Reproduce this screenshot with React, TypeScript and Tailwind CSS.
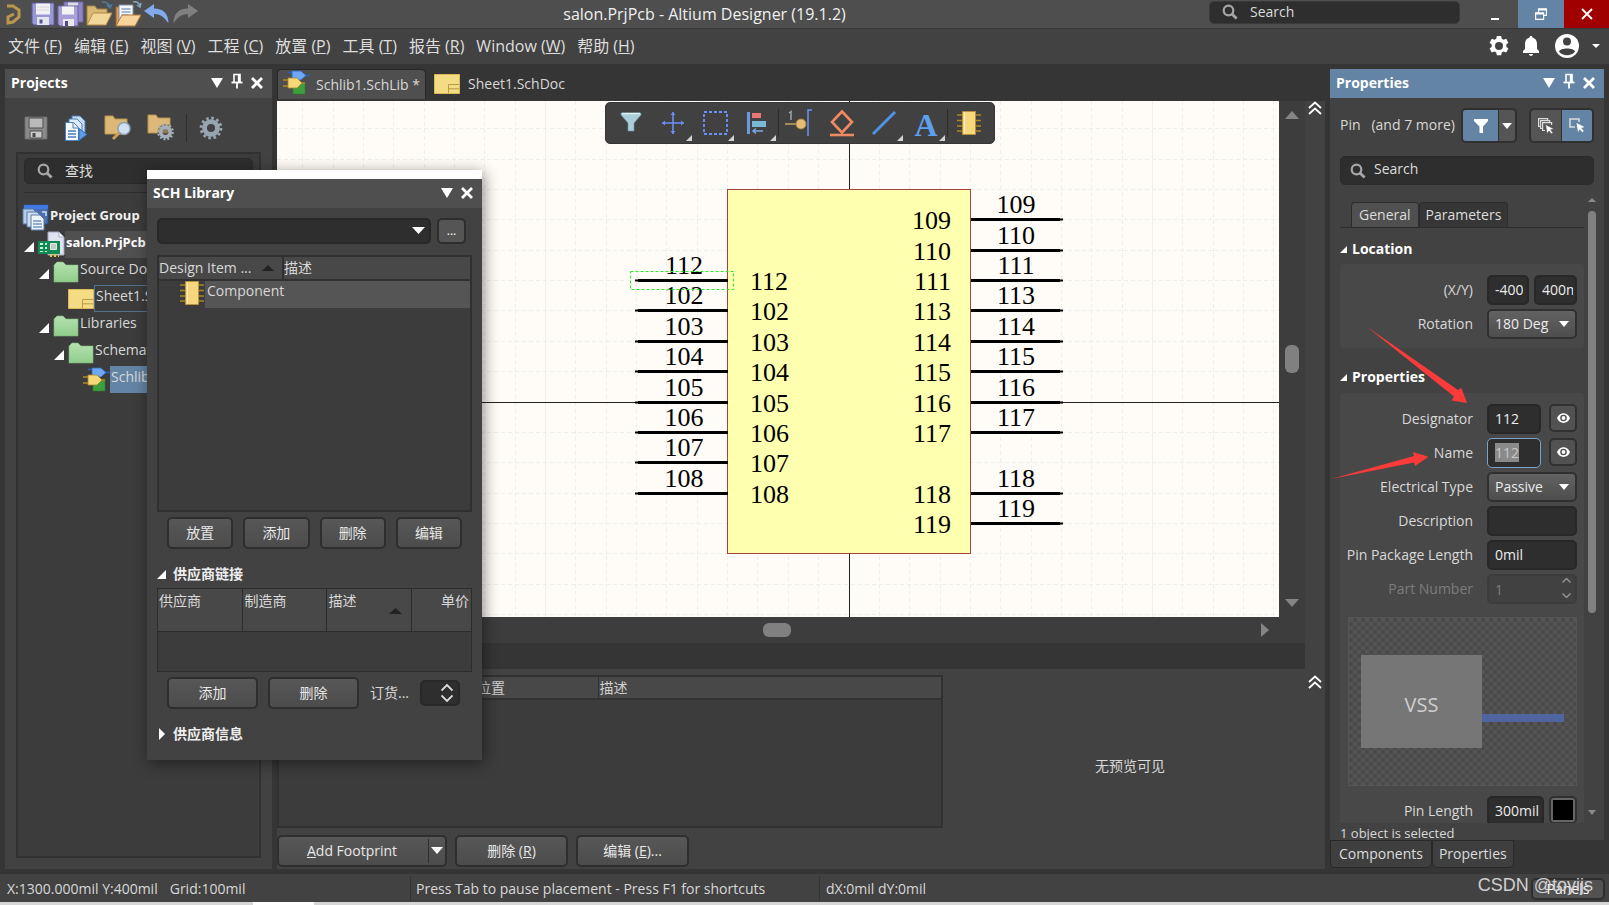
import { useEffect, useRef } from "react";
import type { ReactNode } from "react";

const leftPins = [
  { n: 112, row: 0 },
  { n: 102, row: 1 },
  { n: 103, row: 2 },
  { n: 104, row: 3 },
  { n: 105, row: 4 },
  { n: 106, row: 5 },
  { n: 107, row: 6 },
  { n: 108, row: 7 },
];

const rightPins = [
  { n: 109, row: -2 },
  { n: 110, row: -1 },
  { n: 111, row: 0 },
  { n: 113, row: 1 },
  { n: 114, row: 2 },
  { n: 115, row: 3 },
  { n: 116, row: 4 },
  { n: 117, row: 5 },
  { n: 118, row: 7 },
  { n: 119, row: 8 },
];

const menus = [
  ["文件", "F"],
  ["编辑", "E"],
  ["视图", "V"],
  ["工程", "C"],
  ["放置", "P"],
  ["工具", "T"],
  ["报告", "R"],
  ["Window", "W"],
  ["帮助", "H"],
];

/* ---------- small glyphs ---------- */

const Down = ({ className = "w-3 h-2" }: { className?: string }) => (
  <svg className={className} viewBox="0 0 12 8" preserveAspectRatio="none" fill="currentColor">
    <path d="M0 0h12L6 8z" />
  </svg>
);

const Up = ({ className = "w-3 h-2" }: { className?: string }) => (
  <svg className={className} viewBox="0 0 12 8" preserveAspectRatio="none" fill="currentColor">
    <path d="M0 8h12L6 0z" />
  </svg>
);

const Corner = ({ className = "w-2 h-2" }: { className?: string }) => (
  <svg className={className} viewBox="0 0 8 8" fill="#fff">
    <path d="M8 0v8H0z" />
  </svg>
);

const Cross = () => (
  <svg className="w-3 h-3" viewBox="0 0 12 12" stroke="#fff" strokeWidth="2.8">
    <path d="M1 1l10 10M11 1L1 11" />
  </svg>
);

const Pin = () => (
  <svg className="w-3 h-4" viewBox="0 0 12 16" fill="none" stroke="#fff">
    <path d="M3 9V1.500h6V9" strokeWidth="1.600" />
    <path d="M8 1v8" strokeWidth="2.400" />
    <path d="M0.500 9.500h11" strokeWidth="1.800" />
    <path d="M6 10v5.500" strokeWidth="1.800" />
  </svg>
);

const Magnifier = () => (
  <svg className="w-4 h-4 shrink-0" viewBox="0 0 16 16" fill="none" stroke="#a6a6a6">
    <circle cx="6.500" cy="6.500" r="4.800" strokeWidth="2.200" />
    <path d="M10 10l4.600 4.600" strokeWidth="2.800" />
  </svg>
);

const Chevrons = () => (
  <svg className="w-[14px] h-[14px]" viewBox="0 0 14 14" fill="none" stroke="#fff" strokeWidth="1.800">
    <path d="M1 7l6-5.500L13 7M1 13l6-5.500L13 13" />
  </svg>
);

const Eye = () => (
  <svg className="w-[13px] h-3" viewBox="0 0 13 12">
    <path d="M0 6C2.500-.5 10.500-.5 13 6 10.500 12.500 2.500 12.500 0 6z" fill="#fff" />
    <circle cx="6.500" cy="6" r="3.300" fill="#505050" />
    <circle cx="6.500" cy="6" r="1.900" fill="#fff" />
  </svg>
);

/* ---------- toolbar and tree icons ---------- */

const Floppy = () => (
  <svg className="w-6 h-6" viewBox="0 0 24 24">
    <path d="M1 1h22v22H3l-2-2z" fill="#9a97d6" stroke="#5d5b9e" />
    <path d="M5 1.500h14v11H5z" fill="#f2f2f4" />
    <path d="M6 5h12M6 8h12" stroke="#d5d5dc" />
    <path d="M6 15h12v8H6z" fill="#e4e6ee" />
    <path d="M8.500 17.500h3v4h-3z" fill="#54549a" />
  </svg>
);

const GrayFloppy = () => (
  <svg className="w-6 h-6" viewBox="0 0 24 24">
    <path d="M1 1h22v22H1z" fill="#8b8b8b" stroke="#6a6a6a" />
    <path d="M5 2h14v10H5z" fill="#b9b9b9" stroke="#4f4f4f" />
    <path d="M6 15h12v7H6z" fill="#c9c9c9" stroke="#4f4f4f" />
    <path d="M8.500 17h3v4h-3z" fill="#4a4a4a" />
  </svg>
);

const SaveAll = () => (
  <svg className="w-[27px] h-[26px]" viewBox="0 0 27 26">
    <path d="M7 1h19v20H7z" fill="#8f86c4" stroke="#6a62a6" />
    <path d="M11 1.500h10v6H11z" fill="#dcdce4" />
    <path d="M1 5h20v20H3l-2-2z" fill="#a9a0da" stroke="#6a62a6" />
    <path d="M5 5.500h12v8H5z" fill="#f4f4f6" />
    <path d="M6 18h11v7H6z" fill="#e8e8ee" />
    <path d="M8 20h3v5H8z" fill="#51488a" />
  </svg>
);

const OpenFolder = () => (
  <svg className="w-[27px] h-[26px]" viewBox="0 0 27 26">
    <path d="M1 24V5h8l2 3h10v5" fill="#d8b872" stroke="#a38244" />
    <path d="M1 24L7 12h19l-6 12z" fill="#f3d798" stroke="#b08c4a" />
    <path d="M16 1c4 0 7 1.500 8 5M21 4l3 3 2-4" fill="none" stroke="#4d7f98" strokeWidth="1.500" />
  </svg>
);

const OpenProject = () => (
  <svg className="w-[27px] h-[26px]" viewBox="0 0 27 26">
    <path d="M1 24V6h6v14" fill="#d89c54" stroke="#9b6427" />
    <path d="M4 4h14v17H4z" fill="#f4f7fb" stroke="#8292ab" />
    <path d="M6.500 8h9M6.500 11h9M6.500 14h7" stroke="#8aa4cc" strokeWidth="1.400" />
    <path d="M1 25l6-11h19l-6 11z" fill="#f9d39c" stroke="#b07b3c" />
    <path d="M18 1c4-1 6 1 7 4M22 4l3 2 1-4" fill="none" stroke="#7fa6c0" strokeWidth="1.500" />
  </svg>
);

const Undo = () => (
  <svg className="w-[26px] h-[22px]" viewBox="0 0 26 22" fill="#82abee">
    <path d="M0 8l10-7v4.500c9 0 14.500 5 14.500 15C20.500 14 16 11 10 11v4z" />
  </svg>
);

const Redo = () => (
  <svg className="w-[26px] h-[22px]" viewBox="0 0 26 22" fill="#808080">
    <path d="M26 8L16 1v4.500c-9 0-14.500 5-14.500 15C5.500 14 10 11 16 11v4z" />
  </svg>
);

const CompileDocs = () => (
  <svg className="w-6 h-[26px]" viewBox="0 0 24 26">
    <path d="M8 1h8l5 5v12H8z" fill="#c7dcf2" stroke="#4d7fb8" />
    <path d="M5 4h8l5 5v12H5z" fill="#dce9f7" stroke="#4d7fb8" />
    <path d="M1.500 7.500h8l5 5v13h-13z" fill="#f3f8fd" stroke="#4d7fb8" />
    <path d="M9 8v5h5" fill="none" stroke="#4d7fb8" />
    <path d="M4 16h8M4 19h8M4 22h8" stroke="#4d7fb8" strokeWidth="1.400" />
    <path d="M15 13.500l8 6-8 6z" fill="#5b9ce4" stroke="#2f6cb4" />
  </svg>
);

const GearShape = ({ cx, cy, r, color }: { cx: number; cy: number; r: number; color: string }) => (
  <g fill="none" stroke={color}>
    <circle cx={cx} cy={cy} r={r * 0.56} strokeWidth={r * 0.42} />
    <circle cx={cx} cy={cy} r={r * 0.86} strokeWidth={r * 0.26} strokeDasharray={`${r * 0.225} ${r * 0.225}`} />
  </g>
);

const FolderSearch = () => (
  <svg className="w-[27px] h-[26px]" viewBox="0 0 27 26">
    <path d="M1 1h8l2 3h12v15H1z" fill="#dcb878" stroke="#b8934e" />
    <path d="M15 18l-6 6" stroke="#cf9f55" strokeWidth="3" />
    <circle cx="20" cy="13.500" r="6" fill="#cfe1f0" stroke="#8ea3b5" strokeWidth="1.500" />
  </svg>
);

const FolderGear = () => (
  <svg className="w-[27px] h-[27px]" viewBox="0 0 27 27">
    <path d="M1 1h8l2 3h12v15H1z" fill="#dcb878" stroke="#b8934e" />
    <circle cx="18.500" cy="18" r="8" fill="#424242" opacity=".5" />
    <GearShape cx={18.5} cy={18} r={8.5} color="#a5b0b8" />
  </svg>
);

const Gear = () => (
  <svg className="w-6 h-6" viewBox="0 0 24 24">
    <GearShape cx={12} cy={12} r={11.5} color="#96a5b0" />
  </svg>
);

const GroupIcon = () => (
  <svg className="w-[27px] h-[27px] shrink-0" viewBox="0 0 27 27">
    <path d="M2 1h24v19H2z" fill="#4b6fb0" stroke="#2f4d86" />
    <path d="M2 1h24v4H2z" fill="#3f78e0" />
    <path d="M1 5h10l2 2v13H1z" fill="#b6cbe6" stroke="#5b7aa6" />
    <path d="M5 8h10l3 3v12H5z" fill="#cfdff2" stroke="#5b7aa6" />
    <path d="M9 11h9l4 4v11H9z" fill="#eef4fb" stroke="#5b7aa6" />
    <path d="M11 17h8M11 20h9M11 23h9" stroke="#7395c4" strokeWidth="1.300" />
    <path d="M20 8h4v4" fill="none" stroke="#cfdff2" strokeWidth="1.500" />
  </svg>
);

const PcbProject = () => (
  <svg className="w-[27px] h-[27px] shrink-0" viewBox="0 0 27 27">
    <path d="M10 1h11l5 5v18H10z" fill="#dfe2f0" stroke="#a2a8c2" />
    <path d="M21 1v5h5z" fill="#fff" stroke="#a2a8c2" />
    <path d="M0 10h22v13H0z" fill="#128a54" />
    <path d="M2 12h3v2H2zM2 16h3v2H2zM2 20h3v1H2zM7 12h2v2H7zM7 16h2v2H7zM7 20h2v1H7z" fill="#c9f5df" />
    <path d="M12.500 12.500h6v6h-6z" fill="#c8c8c8" stroke="#e9e9e9" />
    <path d="M12 23h2v3h-2zM16 23h2v3h-2zM20 23h1v3h-1z" fill="#e2c64b" />
  </svg>
);

const GreenFolder = () => (
  <svg className="w-[26px] h-[22px] shrink-0" viewBox="0 0 26 22">
    <defs>
      <linearGradient id="folder" x1="0" y1="0" x2="0" y2="1">
        <stop offset="0" stopColor="#b5e2b1" />
        <stop offset="1" stopColor="#8fcd8a" />
      </linearGradient>
    </defs>
    <path d="M1 21V4l3-3h6l3 3h12v17z" fill="url(#folder)" stroke="#7cb878" strokeWidth=".6" />
  </svg>
);

const SheetIcon = () => (
  <svg className="w-[26px] h-5 shrink-0" viewBox="0 0 26 20">
    <path d="M.5.5h25v19H.5z" fill="#f3dc84" stroke="#d9b958" />
    <path d="M14.500 19v-8.500H25M14.500 14.800H25" fill="none" stroke="#b99b46" />
  </svg>
);

const SchLibIcon = () => (
  <svg className="w-[27px] h-[26px] shrink-0" viewBox="0 0 27 26">
    <path d="M10 13h12v11H10z" fill="#3c9e3c" stroke="#2c7a2c" strokeDasharray="1.500 1" />
    <path d="M5 2.500h5M22 5.500h5" stroke="#2c62b8" strokeWidth="1.400" />
    <path d="M9 1h9l5 4.500-5 4.500H9z" fill="#6ea7f5" stroke="#2f66bd" strokeWidth=".8" />
    <path d="M0 10h6M0 16h6M17 13h5" stroke="#b18c22" strokeWidth="1.400" />
    <path d="M5 8h9l5 5-5 5H5z" fill="#f6d878" stroke="#a98726" strokeWidth=".8" />
  </svg>
);

const ChipIcon = () => (
  <svg className="w-6 h-6 shrink-0" viewBox="0 0 24 24">
    <path d="M0 4h24M0 9.500h24M0 15h24M0 20h24" stroke="#a98726" strokeWidth="1.400" />
    <path d="M5.500.5h13v23h-13z" fill="#f7d77e" stroke="#b8923a" />
    <path d="M7.500 1.500v21" stroke="#fff0bd" />
  </svg>
);

/* ---------- shared controls ---------- */

const PanelHeader = ({ title, active, pinned = true }: { title: string; active?: boolean; pinned?: boolean }) => (
  <div className={`flex h-[29px] shrink-0 items-center gap-2 pb-px pl-[6px] pr-[9px] text-white ${active ? "bg-[#6384a4]" : "bg-[#4f4f4f]"}`}>
    <h2 className="flex-1 text-sm font-bold">{title}</h2>
    <button aria-label="Panel menu">
      <Down className="w-3 h-[10px]" />
    </button>
    {pinned && (
      <button aria-label="Pin panel" className="mb-1">
        <Pin />
      </button>
    )}
    <button aria-label="Close panel">
      <Cross />
    </button>
  </div>
);

const Button = ({ children, className = "" }: { children: ReactNode; className?: string }) => (
  <button
    className={`h-8 rounded-[5px] border-2 border-[#2e2e2e] bg-linear-to-b from-[#575757] to-[#4c4c4c] text-sm text-[#e8e8e8] ${className}`}
  >
    {children}
  </button>
);

const Field = ({ label, id, dim, children }: { label: string; id: string; dim?: boolean; children: ReactNode }) => (
  <div className="flex h-[30px] items-center gap-[14px]">
    <label htmlFor={id} className={`flex-1 pb-px text-right whitespace-nowrap ${dim ? "text-[#7c7c7c]" : "text-[#d8d8d8]"}`}>
      {label}
    </label>
    <div className="flex h-full w-[90px] justify-between">{children}</div>
  </div>
);

const inputClass = "h-full min-w-0 rounded-[5px] border-2 border-[#282828] bg-[#2e2e2e] pb-px text-[#ececec] outline-none";

const SelectBox = ({ id, value }: { id: string; value: string }) => (
  <div className="relative h-full w-full">
    <select
      id={id}
      defaultValue={value}
      className="h-full w-full appearance-none rounded-[5px] border-2 border-[#303030] bg-linear-to-b from-[#626262] to-[#4e4e4e] pb-px pl-[6px] text-[#ececec] outline-none"
    >
      <option>{value}</option>
    </select>
    <Down className="pointer-events-none absolute right-2 top-3 w-[10px] h-[6px] text-white" />
  </div>
);

/* ---------- title and menu ---------- */

const TitleBar = () => (
  <header className="flex h-7 shrink-0 items-center bg-[#4e4e4e]">
    <div className="flex w-[200px] items-center gap-[2px] pl-[6px]">
      <svg className="mr-2 w-[15px] h-[22px]" viewBox="0 0 15 22" fill="none" stroke="#b9964d" strokeWidth="3">
        <path d="M1 3h6l6 4v7l-6 5-5 1v-6l6-3" />
      </svg>
      <Floppy />
      <SaveAll />
      <OpenFolder />
      <OpenProject />
      <Undo />
      <Redo />
    </div>
    <h1 className="flex-1 text-center text-base leading-5 text-[#f0f0f0]">salon.PrjPcb - Altium Designer (19.1.2)</h1>
    <div className="mb-1 flex h-[23px] w-[251px] items-center gap-3 rounded-[5px] border border-[#3a3a3a] bg-[#2e2e2e] pl-3">
      <Magnifier />
      <input
        aria-label="Search"
        placeholder="Search"
        className="min-w-0 flex-1 bg-transparent text-sm text-[#dcdcdc] outline-none placeholder:text-[#dcdcdc]"
      />
    </div>
    <div className="ml-3 flex h-full">
      <button aria-label="Minimize" className="flex w-[46px] items-end justify-center pb-2">
        <span className="h-[2px] w-2 bg-white" />
      </button>
      <button aria-label="Restore" className="flex w-[46px] items-center justify-center bg-[#6384a4]">
        <svg className="w-3 h-3" viewBox="0 0 12 12" fill="none" stroke="#fff">
          <path d="M3.500 5V.8h8v6.500H9M3.500 2h8" strokeWidth="1.200" />
          <path d="M.6 4.800h8v6.500h-8zM.6 6h8" strokeWidth="1.200" />
        </svg>
      </button>
      <button aria-label="Close" className="flex w-[45px] items-center justify-center bg-[#a00000]">
        <svg className="w-3 h-3" viewBox="0 0 12 12" stroke="#fff" strokeWidth="1.800">
          <path d="M1 1l10 10M11 1L1 11" />
        </svg>
      </button>
    </div>
  </header>
);

const MenuBar = () => (
  <nav className="flex h-9 shrink-0 items-center border-t border-[#383838] bg-[#424242] px-2 pb-[2px]">
    <div className="flex flex-1 gap-3 text-base leading-5 text-[#dedede]">
      {menus.map(([name, key]) => (
        <button key={key}>
          {name} (<span className="underline">{key}</span>)
        </button>
      ))}
    </div>
    <div className="flex items-center gap-[13px] pr-px">
      <button aria-label="Settings">
        <svg className="w-5 h-5" viewBox="0 0 20 20" fill="#fff">
          <path
            fillRule="evenodd"
            d="M7.800 0h4.400l.5 2.700 1.900 1.100 2.600-1 2.200 3.900-2.100 1.800v2.200l2.100 1.800-2.200 3.900-2.600-1-1.900 1.100-.5 2.700H7.800l-.5-2.700-1.900-1.100-2.600 1L.6 12.500l2.100-1.800V8.500L.6 6.700l2.200-3.900 2.600 1 1.900-1.100zM10 6a4 4 0 100 8 4 4 0 000-8z"
          />
        </svg>
      </button>
      <button aria-label="Notifications">
        <svg className="w-[18px] h-5" viewBox="0 0 18 20" fill="#fff">
          <path d="M9 0c1 0 1.500.7 1.500 1.500C13.500 2.300 15 4.800 15 8v5l2 2v2H1v-2l2-2V8c0-3.200 1.500-5.700 4.500-6.500C7.500.7 8 0 9 0zM7 18h4c0 2.600-4 2.600-4 0z" />
        </svg>
      </button>
      <button aria-label="Account">
        <svg className="ml-[2px] w-6 h-6" viewBox="0 0 24 24">
          <circle cx="12" cy="12" r="12" fill="#fff" />
          <circle cx="12" cy="7.500" r="4" fill="#424242" />
          <path d="M4 17.500c1-4 15-4 16 0-3.500 5-12.500 5-16 0z" fill="#424242" />
        </svg>
      </button>
      <button aria-label="Account menu" className="text-white">
        <Down className="w-2 h-1" />
      </button>
    </div>
  </nav>
);

/* ---------- projects ---------- */

const TreeRow = ({
  indent,
  icon,
  open,
  label,
  labelClass = "",
}: {
  indent: string;
  icon: ReactNode;
  open?: boolean;
  label: string;
  labelClass?: string;
}) => (
  <li className={`flex h-[27px] items-center ${indent}`}>
    <span className="flex w-[14px] shrink-0">{open && <Corner className="mt-1 w-[10px] h-[10px]" />}</span>
    {icon}
    <span className={`flex h-full flex-1 items-center pb-[5px] pl-px whitespace-nowrap ${labelClass}`}>{label}</span>
  </li>
);

const ProjectsPanel = () => (
  <aside className="flex w-[267px] shrink-0 flex-col bg-[#424242]">
    <PanelHeader title="Projects" />
    <div className="flex h-[54px] shrink-0 items-center gap-4 px-[19px] pt-[5px]">
      <button aria-label="Save">
        <GrayFloppy />
      </button>
      <button aria-label="Compile">
        <CompileDocs />
      </button>
      <button aria-label="Explore">
        <FolderSearch />
      </button>
      <button aria-label="Project options">
        <FolderGear />
      </button>
      <span className="-mx-1 h-7 w-px bg-[#2f2f2f]" />
      <button aria-label="Settings">
        <Gear />
      </button>
    </div>
    <div className="mx-[11px] mb-[11px] flex flex-1 flex-col overflow-hidden border-2 border-[#313131] bg-[#3c3c3c] px-[6px] pt-1">
      <div className="flex h-[26px] shrink-0 items-center gap-3 rounded-[5px] border border-[#292929] bg-[#2e2e2e] pb-px pl-3">
        <Magnifier />
        <input
          aria-label="查找"
          placeholder="查找"
          className="min-w-0 flex-1 bg-transparent text-sm outline-none placeholder:text-[#dcdcdc]"
        />
      </div>
      <div className="mt-2 mb-[11px] h-px shrink-0 bg-[#2c2c2c]" />
      <ul className="text-sm text-[#d8d8d8]">
        <TreeRow indent="-ml-4" icon={<GroupIcon />} label="Project Group" labelClass="text-[13px] font-bold text-[#f2f2f2]" />
        <TreeRow indent="" open icon={<PcbProject />} label="salon.PrjPcb" labelClass="bg-[#505050] text-[13px] font-bold text-white" />
        <TreeRow indent="pl-[15px]" open icon={<GreenFolder />} label="Source Documents" />
        <TreeRow indent="pl-[30px]" icon={<SheetIcon />} label="Sheet1.SchDoc" labelClass="border border-[#53708c]" />
        <TreeRow indent="pl-[15px]" open icon={<GreenFolder />} label="Libraries" />
        <TreeRow indent="pl-[30px]" open icon={<GreenFolder />} label="Schematic Library" />
        <TreeRow indent="pl-[45px]" icon={<SchLibIcon />} label="Schlib1.SchLib *" labelClass="bg-[#6384a4]" />
      </ul>
    </div>
  </aside>
);

/* ---------- schematic canvas ---------- */

const PITCH = 30.35;
const ORIGIN = { x: 573, y: 301 };
const steps = Array.from({ length: 70 }, (_, i) => i - 30);

const rowY = (row: number) => Math.floor(ORIGIN.y + (row - 4) * PITCH);

const Schematic = () => (
  <svg className="absolute inset-0 h-full w-full bg-[#fffcf7]" fontFamily="Liberation Serif, serif" fontSize="26">
    <g stroke="#efefec">
      {steps.map((i) => {
        const x = Math.floor(ORIGIN.x + i * PITCH) - 0.5;
        const y = Math.floor(ORIGIN.y + i * PITCH) + 0.5;
        const dash = i % 10 === 0 ? undefined : "4 3";
        return (
          <g key={i} strokeDasharray={dash}>
            <path d={`M${x} 0V2000`} />
            <path d={`M0 ${y}H3000`} />
          </g>
        );
      })}
    </g>
    <path d={`M${ORIGIN.x - 0.5} 0V2000M0 ${ORIGIN.y + 0.5}H3000`} stroke="#222" />
    <rect x="450.500" y="88.500" width="243" height="364" fill="#ffffb0" stroke="#a2433c" />
    {leftPins.map(({ n, row }) => (
      <g key={n}>
        <path d={`M361 ${rowY(row) + 0.5}H451`} stroke="#000" strokeWidth="3" />
        <path d={`M358 ${rowY(row) + 0.5}H362`} stroke="#000" strokeWidth="2" />
        <text x="407" y={rowY(row) - 6} textAnchor="middle">
          {n}
        </text>
        <text x="473" y={rowY(row) + 10}>
          {n}
        </text>
      </g>
    ))}
    {rightPins.map(({ n, row }) => (
      <g key={n}>
        <path d={`M694 ${rowY(row) + 0.5}H783`} stroke="#000" strokeWidth="3" />
        <path d={`M782 ${rowY(row) + 0.5}H786`} stroke="#000" strokeWidth="2" />
        <text x="739" y={rowY(row) - 6} textAnchor="middle">
          {n}
        </text>
        <text x="674" y={rowY(row) + 10} textAnchor="end">
          {n}
        </text>
      </g>
    ))}
    <rect x="353.500" y="170.500" width="103" height="18" fill="none" stroke="#2bea2b" strokeDasharray="3 2" />
  </svg>
);

const Tool = ({ label, more, children }: { label: string; more?: boolean; children: ReactNode }) => (
  <button aria-label={label} className="relative flex h-10 w-[42px] items-center justify-center">
    <svg className="w-[30px] h-7" viewBox="0 0 30 28" fill="none">
      {children}
    </svg>
    {more && (
      <svg className="absolute bottom-[2px] right-[2px] w-[6px] h-[6px]" viewBox="0 0 6 6" fill="#d4d4d4">
        <path d="M6 0v6H0z" />
      </svg>
    )}
  </button>
);

const ActiveBar = () => (
  <div className="absolute left-[328px] top-px flex h-[42px] items-center rounded-[5px] border border-[#363636] bg-[#414141] px-1">
    <Tool label="Filter">
      <path d="M5 4h20v2l-7 8v8h-6v-8L5 6z" fill="#a9cdd9" stroke="#6b97a8" strokeWidth=".6" />
      <path d="M6 4.500h18" stroke="#e0f0f4" strokeWidth="1.500" />
    </Tool>
    <Tool label="Move" more>
      <path d="M15 3v22M4 14h22" stroke="#6a8ff0" strokeWidth="1.600" />
      <path d="M12.500 6L15 3l2.500 3zM12.500 22l2.500 3 2.500-3zM7 11.500L4 14l3 2.500zM23 11.500l3 2.500-3 2.500z" fill="#6a8ff0" />
    </Tool>
    <Tool label="Select" more>
      <path d="M4 3h23v22H4z" stroke="#6a93f5" strokeWidth="1.800" strokeDasharray="3 2" />
    </Tool>
    <Tool label="Align" more>
      <path d="M5 3h3v22H5z" fill="#6f98d8" />
      <path d="M10 4h9v5h-9z" fill="#ea7676" />
      <path d="M10 12h14v6H10z" fill="#79b9d8" />
      <path d="M11 22h10M14 19.500L11 22l3 2.500" stroke="#7aa7e6" strokeWidth="1.500" />
    </Tool>
    <span className="h-7 w-px bg-[#2c2c2c]" />
    <Tool label="Place pin">
      <path d="M0 15h13" stroke="#b3935a" strokeWidth="1.800" />
      <circle cx="16" cy="15" r="5" fill="#e6bd76" stroke="#a88546" />
      <path d="M27 1h-4v26" stroke="#6a93f5" strokeWidth="1.500" />
      <path d="M4 4l2-1.500V11" stroke="#9aa7ae" strokeWidth="1.500" />
    </Tool>
    <Tool label="Place IEEE symbol">
      <path d="M15 2.500L25 13 15 23.500 5 13z" stroke="#f08a62" strokeWidth="2.600" />
      <path d="M3 26h24" stroke="#f08a62" strokeWidth="2.600" />
    </Tool>
    <Tool label="Place line" more>
      <path d="M4 25L26 3" stroke="#4f92e4" strokeWidth="3" />
    </Tool>
    <button
      aria-label="Place text"
      className="relative flex h-10 w-[42px] items-center justify-center pt-1 font-['Liberation_Serif',serif] text-[32px] font-bold text-[#5e9fee]"
    >
      A
      <svg className="absolute bottom-[2px] right-[2px] w-[6px] h-[6px]" viewBox="0 0 6 6" fill="#d4d4d4">
        <path d="M6 0v6H0z" />
      </svg>
    </button>
    <span className="h-7 w-px bg-[#2c2c2c]" />
    <button aria-label="Place part" className="flex h-10 w-[42px] items-center justify-center">
      <ChipIcon />
    </button>
  </div>
);

const Editor = () => (
  <main className="flex min-w-0 flex-1 flex-col">
    <div className="flex h-8 shrink-0 text-sm text-[#d8d8d8]">
      <button className="flex h-[30px] items-center gap-[6px] rounded-t-[5px] border border-b-0 border-[#282828] bg-[#4f4f4f] px-[5px]">
        <span className="-mt-1">
          <SchLibIcon />
        </span>
        Schlib1.SchLib *
      </button>
      <button className="flex h-[30px] items-center gap-2 px-2">
        <SheetIcon />
        Sheet1.SchDoc
      </button>
    </div>

    <div className="flex min-h-0 flex-1">
      <div className="flex min-w-0 flex-1 flex-col">
        <div className="relative flex-1 overflow-hidden">
          <Schematic />
          <ActiveBar />
        </div>
        <div className="flex h-[26px] shrink-0 items-center bg-[#3d3d3d] pr-[10px] pl-4">
          <div className="flex flex-1 justify-center">
            <span className="h-[14px] w-7 rounded-md bg-[#808080]" />
          </div>
          <svg className="w-2 h-[14px]" viewBox="0 0 8 14" fill="#858585">
            <path d="M0 0v14l8-7z" />
          </svg>
        </div>
      </div>
      <div className="flex w-[26px] shrink-0 flex-col items-center justify-between bg-[#3d3d3d] pt-[10px] pb-9 text-[#858585]">
        <Up className="w-[14px] h-2" />
        <span className="h-7 w-[14px] rounded-md bg-[#808080]" />
        <Down className="w-[14px] h-2" />
      </div>
      <div className="w-5 shrink-0 bg-[#424242]">
        <button aria-label="Expand" className="block pl-[3px]">
          <Chevrons />
        </button>
      </div>
    </div>

    <div className="h-[26px] shrink-0 border-r-20 border-[#424242] bg-[#353535]" />

    <div className="flex h-[200px] shrink-0 bg-[#424242]">
      <div className="flex w-[666px] shrink-0 flex-col pt-[6px]">
        <div className="h-[153px] border-2 border-[#313131] bg-[#3c3c3c]">
          <table className="w-full table-fixed text-left text-sm text-[#d0d0d0]">
            <thead>
              <tr className="h-[22px] border-b-2 border-[#313131] bg-[#484848]">
                <th className="w-[198px] p-0" />
                <th className="w-[121px] p-0 font-normal">位置</th>
                <th className="border-l border-[#313131] p-0 pl-px font-normal">描述</th>
              </tr>
            </thead>
          </table>
        </div>
        <div className="mt-[7px] flex gap-2">
          <div className="relative flex">
            <Button className="w-[170px] pr-5">
              <span className="underline">A</span>dd Footprint
            </Button>
            <span className="pointer-events-none absolute right-[18px] top-1 h-6 w-px bg-[#2e2e2e]" />
            <Down className="pointer-events-none absolute right-1 top-3 w-3 h-[7px] text-white" />
          </div>
          <Button className="w-[113px]">
            删除 (<span className="underline">R</span>)
          </Button>
          <Button className="w-[113px]">
            编辑 (<span className="underline">E</span>)...
          </Button>
        </div>
      </div>
      <div className="flex flex-1 items-center justify-center pb-[6px] pl-3 text-sm text-[#d8d8d8]">无预览可见</div>
      <div className="w-5 pt-[6px]">
        <button aria-label="Expand" className="block pl-[3px]">
          <Chevrons />
        </button>
      </div>
    </div>
  </main>
);

/* ---------- floating library window ---------- */

const SchLibrary = () => (
  <section className="absolute left-[147px] top-[170px] w-[335px] border-t-[9px] border-white bg-[#424242] text-sm text-[#d8d8d8] shadow-[2px_3px_14px_rgba(0,0,0,0.45)]">
    <PanelHeader title="SCH Library" pinned={false} />
    <div className="px-[10px] pt-[10px] pb-[14px]">
      <div className="flex h-[26px] gap-[6px] pr-[6px]">
        <div className="relative flex-1">
          <select
            aria-label="Library"
            className="h-full w-full appearance-none rounded-[5px] border-2 border-[#282828] bg-[#2e2e2e] outline-none"
          />
          <Down className="pointer-events-none absolute right-[6px] top-[9px] w-[13px] h-[7px] text-white" />
        </div>
        <button className="w-[29px] rounded-[5px] border-2 border-[#2e2e2e] bg-[#555] text-xs text-white">...</button>
      </div>

      <div className="mt-[11px] h-[257px] border-2 border-[#303030] bg-[#3c3c3c]">
        <table className="w-full table-fixed text-left">
          <thead>
            <tr className="h-[23px] border-b-2 border-[#303030] bg-[#484848]">
              <th className="w-[124px] p-0 font-normal">
                <div className="flex items-center justify-between pr-2 whitespace-nowrap">
                  Design Item ...
                  <Up className="w-3 h-[6px] text-[#222]" />
                </div>
              </th>
              <th className="border-l-2 border-[#303030] p-0 font-normal">描述</th>
            </tr>
          </thead>
          <tbody>
            <tr className="h-[27px]">
              <td colSpan={2} className="p-0">
                <div className="flex h-[27px] pl-[21px]">
                  <ChipIcon />
                  <span className="ml-px flex-1 bg-[#555] pl-[2px]">Component</span>
                </div>
              </td>
            </tr>
          </tbody>
        </table>
      </div>

      <div className="mt-[5px] grid grid-cols-4 gap-[10px] px-[10px]">
        <Button>放置</Button>
        <Button>添加</Button>
        <Button>删除</Button>
        <Button>编辑</Button>
      </div>

      <h3 className="mt-[13px] flex h-6 items-center gap-[7px] font-bold text-[#eee]">
        <Corner className="w-[9px] h-[9px]" />
        供应商链接
      </h3>
      <div className="mt-[2px] h-[84px] border border-[#2c2c2c] bg-[#3c3c3c]">
        <table className="w-full table-fixed text-left">
          <thead>
            <tr className="h-[42px] border-b border-[#2c2c2c] bg-[#484848] align-top">
              <th className="w-[84px] pt-[2px] pl-px font-normal">供应商</th>
              <th className="w-[84px] border-l border-[#2c2c2c] pt-[2px] pl-[2px] font-normal">制造商</th>
              <th className="w-[85px] border-l border-[#2c2c2c] pt-[2px] pl-[2px] font-normal">
                <div className="flex justify-between pr-[9px]">
                  描述
                  <Up className="mt-[17px] w-[13px] h-[6px] text-[#222]" />
                </div>
              </th>
              <th className="border-l border-[#2c2c2c] pt-[2px] pr-[2px] text-right font-normal">单价</th>
            </tr>
          </thead>
        </table>
      </div>

      <div className="mt-[5px] flex items-center gap-[10px] pr-3 pl-[10px]">
        <Button className="w-[91px]">添加</Button>
        <Button className="w-[91px]">删除</Button>
        <label htmlFor="qty" className="flex-1 pl-px whitespace-nowrap">
          订货...
        </label>
        <div className="relative h-[26px] w-10">
          <input id="qty" className="h-full w-full rounded-[5px] border-2 border-[#282828] bg-[#2e2e2e] outline-none" />
          <svg className="pointer-events-none absolute right-[7px] top-1 w-3 h-[18px]" viewBox="0 0 12 18" fill="none" stroke="#ddd" strokeWidth="1.800">
            <path d="M.5 6.500L6 1l5.500 5.500M.5 11.500L6 17l5.500-5.500" />
          </svg>
        </div>
      </div>

      <h3 className="mt-[13px] flex h-6 items-center gap-2 font-bold text-[#eee]">
        <svg className="ml-[2px] w-[6px] h-3" viewBox="0 0 6 12" fill="#fff">
          <path d="M0 0v12l6-6z" />
        </svg>
        供应商信息
      </h3>
    </div>
  </section>
);

/* ---------- properties ---------- */

const PropertiesPanel = () => {
  const nameRef = useRef<HTMLInputElement>(null);

  useEffect(() => {
    nameRef.current?.focus();
    nameRef.current?.select();
  }, []);

  return (
    <aside className="relative flex w-[274px] shrink-0 flex-col text-sm">
      <div className="flex min-h-0 flex-1 flex-col bg-[#424242]">
        <PanelHeader title="Properties" active />
        <div className="mt-[10px] flex h-[35px] shrink-0 items-center pl-[10px] pr-[10px] text-[#d8d8d8]">
          <span className="flex-1 pb-[2px] whitespace-pre">Pin   (and 7 more)</span>
          <div className="flex h-full rounded-[5px] border-2 border-[#303030] bg-[#555] text-white">
            <button aria-label="Filter" className="flex w-[35px] items-center justify-center rounded-l-[3px] bg-[#6384a4]">
              <svg className="w-[14px] h-[14px]" viewBox="0 0 14 14" fill="#fff">
                <path d="M0 0h14v2L9 7.500V14H5.500V7.500L0 2z" />
              </svg>
            </button>
            <button aria-label="Filter options" className="flex w-[17px] items-center justify-center border-l border-[#303030]">
              <Down className="w-[10px] h-[6px]" />
            </button>
          </div>
          <div className="ml-3 flex h-full rounded-[5px] border-2 border-[#303030] bg-[#555]">
            <button aria-label="Select similar" className="flex w-[30px] items-center justify-center">
              <svg className="w-4 h-4" viewBox="0 0 16 16" fill="none" stroke="#ddd">
                <path d="M2 8.500H.6V.6h9V2" strokeWidth="1.200" />
                <path d="M4 10.500H2.600V2.600h9V4" strokeWidth="1.200" />
                <path d="M7 12.500H4.600V4.600h9V7" strokeWidth="1.200" />
                <path d="M7.500 6.500L16 11l-3.400.8 2.400 3-1.500 1.200-2.400-3-2 2.500z" fill="#fff" stroke="#555" strokeWidth=".6" />
              </svg>
            </button>
            <button aria-label="Select one" className="flex w-[31px] items-center justify-center rounded-r-[3px] border-l border-[#303030] bg-[#6384a4]">
              <svg className="w-4 h-4" viewBox="0 0 16 16" fill="none" stroke="#ddd">
                <path d="M6 9H1V1h9v3" strokeWidth="1.500" />
                <path d="M7.500 5l8 4-3.300 1 2.600 3-1.500 1.200-2.500-3L9 14z" fill="#fff" stroke="none" />
              </svg>
            </button>
          </div>
        </div>

        <div className="mx-[10px] mt-[13px] flex h-[29px] shrink-0 items-center gap-2 rounded-[5px] border border-[#2b2b2b] bg-[#2e2e2e] pl-[9px]">
          <Magnifier />
          <input
            aria-label="Search properties"
            placeholder="Search"
            className="min-w-0 flex-1 bg-transparent pb-1 outline-none placeholder:text-[#dcdcdc]"
          />
        </div>

        <div className="mt-[13px] flex min-h-0 flex-1">
          <div className="ml-[10px] flex w-[244px] flex-col overflow-hidden pt-1">
            <div className="flex h-[26px] shrink-0 border-b border-[#2c2c2c] pl-[11px] text-[#dcdcdc]">
              <button className="rounded-t-[4px] border border-b-0 border-[#2c2c2c] bg-[#505050] px-[7px]">General</button>
              <button className="rounded-t-[4px] border border-b-0 border-[#2c2c2c] bg-[#363636] px-[6px]">Parameters</button>
            </div>

            <h3 className="mt-[10px] flex h-[22px] shrink-0 items-center gap-[5px] font-bold text-white">
              <Corner className="w-[7px] h-[7px]" />
              Location
            </h3>
            <div className="mt-1 flex shrink-0 flex-col gap-1 rounded-[4px] bg-[#484848] pt-[11px] pr-[7px] pb-[9px]">
              <Field label="(X/Y)" id="loc-x">
                <input id="loc-x" defaultValue="-400mil" className={`${inputClass} w-[42px] pl-[6px] pr-1`} />
                <input aria-label="Y" defaultValue="400mil" className={`${inputClass} w-[43px] pl-[6px] pr-[2px]`} />
              </Field>
              <Field label="Rotation" id="rotation">
                <SelectBox id="rotation" value="180 Deg" />
              </Field>
            </div>

            <h3 className="mt-[18px] flex h-[22px] shrink-0 items-center gap-[5px] font-bold text-white">
              <Corner className="w-[7px] h-[7px]" />
              Properties
            </h3>
            <div className="mt-[5px] flex flex-1 flex-col gap-1 overflow-hidden rounded-t-[4px] bg-[#484848] pt-[11px] pr-[7px]">
              <div className="flex flex-col gap-[4px]">
                <Field label="Designator" id="designator">
                  <input id="designator" defaultValue="112" className={`${inputClass} w-[54px] pl-[6px]`} />
                  <button aria-label="Show designator" className="flex h-[28px] w-7 items-center justify-center rounded-[5px] border-2 border-[#303030] bg-[#525252]">
                    <Eye />
                  </button>
                </Field>
                <Field label="Name" id="name">
                  <input
                    ref={nameRef}
                    id="name"
                    defaultValue="112"
                    className="h-full w-[54px] min-w-0 rounded-[5px] border border-[#7ba3cc] bg-[#2e2e2e] pb-px pl-[7px] text-[#c8c8c8] outline-none selection:bg-[#8a8a8a] selection:text-[#c8c8c8]"
                  />
                  <button aria-label="Show name" className="flex h-[28px] w-7 items-center justify-center rounded-[5px] border-2 border-[#303030] bg-[#525252]">
                    <Eye />
                  </button>
                </Field>
                <Field label="Electrical Type" id="etype">
                  <SelectBox id="etype" value="Passive" />
                </Field>
                <Field label="Description" id="description">
                  <input id="description" className={`${inputClass} w-full`} />
                </Field>
                <Field label="Pin Package Length" id="pkg-length">
                  <input id="pkg-length" defaultValue="0mil" className={`${inputClass} w-full pl-[6px]`} />
                </Field>
                <Field label="Part Number" id="part-number" dim>
                  <div className="relative h-full w-full">
                    <input
                      id="part-number"
                      disabled
                      defaultValue="1"
                      className="h-full w-full rounded-[5px] border-2 border-[#3c3c3c] bg-[#414141] pl-[6px] text-[#7c7c7c]"
                    />
                    <svg className="absolute right-[6px] top-1 w-[9px] h-5" viewBox="0 0 9 20" fill="none" stroke="#999" strokeWidth="1.300">
                      <path d="M.5 4.500l4-4 4 4M.5 15.500l4 4 4-4" />
                    </svg>
                  </div>
                </Field>
              </div>

              <div className="mt-[9px] ml-2 h-[169px] shrink-0 border border-[#555] bg-[repeating-conic-gradient(#4a4a4a_0_25%,#545454_0_50%)] bg-[length:8px_8px] pt-[37px] pl-3">
                <div className="flex items-center">
                  <div className="flex h-[93px] w-[121px] items-center justify-center bg-[#767676] pt-[6px] text-xl text-[#cfcfcf]">VSS</div>
                  <span className="mt-8 h-2 w-[82px] bg-[#5064a0]" />
                </div>
              </div>

              <div className="mt-[6px]">
                <Field label="Pin Length" id="pin-length">
                  <input id="pin-length" defaultValue="300mil" className={`${inputClass} w-[57px] pl-[6px]`} />
                  <button aria-label="Pin color" className="h-[28px] w-7 rounded-[5px] border-2 border-[#303030] bg-[#666] p-[2px]">
                    <span className="block h-full w-full bg-black" />
                  </button>
                </Field>
              </div>
            </div>
          </div>
          <div className="ml-[4px] flex w-2 flex-col items-center text-[#8a8a8a]">
            <Up className="w-2 h-1" />
            <span className="mt-[9px] h-[402px] w-2 rounded-full bg-[#808080]" />
            <span className="flex-1" />
            <Down className="mb-2 w-2 h-[5px]" />
          </div>
        </div>

        <p className="h-[17px] shrink-0 overflow-hidden pt-[2px] pl-[10px] text-[13px] leading-4 text-[#d8d8d8]">1 object is selected</p>
      </div>

      <div className="flex h-[29px] shrink-0 text-[#dcdcdc]">
        <button className="h-7 rounded-b-[5px] border border-[#282828] bg-[#3f3f3f] px-[8px]">Components</button>
        <button className="h-7 rounded-b-[5px] border border-[#282828] bg-[#3f3f3f] px-[6px]">Properties</button>
      </div>

      {/* callout arrows */}
      <svg className="pointer-events-none absolute left-0 top-[250px] h-[170px] w-[150px]" viewBox="0 0 150 170" fill="#fb3a3a">
        <path d="M36.500 7.500L128 71l3.500-2L137 84l-15.500-2.500 2.500-4z" />
        <path d="M1 160L84 137l-1-4 15.500 4.700L85 147l-1-3.500z" />
      </svg>
    </aside>
  );
};

const StatusBar = () => (
  <footer className="flex h-7 shrink-0 items-center bg-[#424242] pt-px text-sm text-[#d8d8d8]">
    <div className="flex w-[410px] gap-3 pl-[7px]">
      <span>X:1300.000mil Y:400mil</span>
      <span>Grid:100mil</span>
    </div>
    <div className="flex h-6 w-[409px] items-center border-l border-[#333] pl-[5px]">
      Press Tab to pause placement - Press F1 for shortcuts
    </div>
    <div className="flex h-6 flex-1 items-center border-l border-[#333] pl-[6px]">dX:0mil dY:0mil</div>
    <div className="relative mr-1">
      <button className="h-[22px] w-[74px] rounded-[5px] border-2 border-[#2e2e2e] bg-[#525252] text-sm leading-none text-white">
        Panels
      </button>
      <span className="pointer-events-none absolute right-3 -top-[7px] font-['Liberation_Sans',sans-serif] text-lg whitespace-nowrap text-[#d0d0d0]">
        CSDN @toyijs
      </span>
    </div>
  </footer>
);

const App = () => (
  <div className="relative flex h-screen flex-col overflow-hidden bg-[#353535] font-['Open_Sans','Noto_Sans_CJK_SC',sans-serif] leading-5">
    <TitleBar />
    <MenuBar />
    <div className="flex min-h-0 flex-1 gap-[5px] px-[5px] pt-[5px] pb-[5px]">
      <ProjectsPanel />
      <Editor />
      <PropertiesPanel />
    </div>
    <StatusBar />
    <div className="h-[3px] shrink-0 bg-[#d6d6d6] pl-[253px]">
      <div className="h-full w-[61px] bg-white" />
    </div>
    <SchLibrary />
  </div>
);

export default App;
